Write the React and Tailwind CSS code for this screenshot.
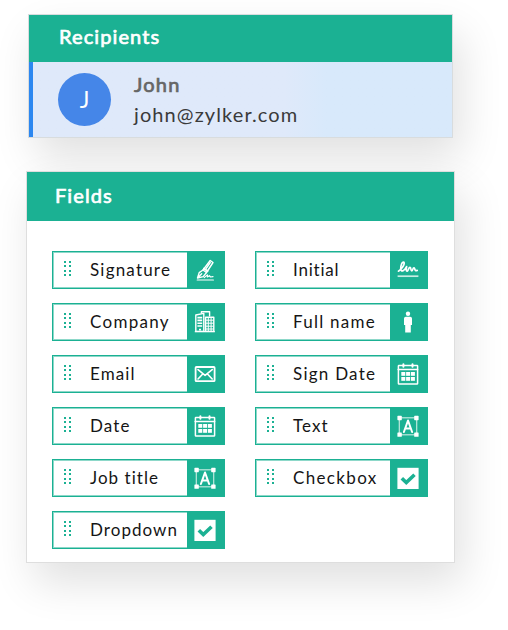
import React from "react";

const stroke = { fill: "none", stroke: "#fff", strokeLinecap: "round", strokeLinejoin: "round" };

function Icon({ children }) {
  return (
    <svg width="24" height="24" viewBox="0 0 24 24" className="block">
      {children}
    </svg>
  );
}

function SignatureIcon() {
  return (
    <Icon>
      <g {...stroke} strokeWidth="1.4">
        <path d="M17.2 2.5 L20 4.5 L13.5 14.5 L10 12 Z" />
        <path d="M10 12 L6.2 14.6 L4.5 20 L10.2 18.6 L13.5 14.5 M4.7 19.8 L8.7 15.8" />
        <path d="M11 10.6 L14.6 13" strokeWidth="2" />
        <path d="M17.2 4.6 L13.2 10.4" strokeWidth="1.6" />
        <path d="M11.2 19.6 L14.4 16.9 L14.4 19 L16.4 17.7 L17.5 19 L20 18.6" strokeWidth="1.2" />
        <path d="M4.2 22 H20.4" strokeWidth="1.2" />
      </g>
    </Icon>
  );
}

function CompanyIcon() {
  return (
    <Icon>
      <g {...stroke} strokeWidth="1.4" strokeLinecap="butt">
        <path d="M2.8 21.4 V5 L10.8 3.4 V21.4 Z" />
        <path d="M4.4 7.6 H9.2 M4.4 10.4 H9.2 M4.4 13.2 H9.2 M4.4 16 H9.2 M6 19.6 H8" strokeWidth="1.6" />
        <path d="M8.4 3.4 V1.8 H16.6 V6.5" />
        <path d="M12.6 21.4 V7.2 H20.8 V21.4 Z" />
        <path d="M15.3 7.2 V21.4 M18.1 7.2 V21.4 M12.6 10.2 H20.8 M12.6 13.2 H20.8 M12.6 16.2 H20.8 M12.6 19 H20.8" strokeWidth="1" />
        <path d="M1.8 21.6 H21.8" />
      </g>
    </Icon>
  );
}

function EmailIcon() {
  return (
    <Icon>
      <g {...stroke} strokeWidth="1.8">
        <rect x="2.6" y="5" width="19" height="14.2" rx="0.8" />
        <path d="M5 7.6 L12.1 13.4 L19.2 7.6 M5 17 L9.5 12.2 M19.2 17 L14.7 12.2" strokeWidth="1.6" />
      </g>
    </Icon>
  );
}

function CalendarIcon() {
  return (
    <Icon>
      <g {...stroke} strokeWidth="1.5">
        <rect x="2.4" y="3.4" width="19.2" height="18.6" rx="0.6" />
        <path d="M2.2 7.4 H21.6" />
        <path d="M7.4 2.2 V4.8 M16.5 2.2 V4.8" strokeWidth="2" />
      </g>
      <g fill="#fff">
        <rect x="5.3" y="10" width="4" height="3.8" />
        <rect x="10.1" y="10" width="4" height="3.8" />
        <rect x="14.9" y="10" width="4" height="3.8" />
        <rect x="5.3" y="15" width="4" height="3.8" />
        <rect x="10.1" y="15" width="4" height="3.8" />
        <rect x="14.9" y="15" width="4" height="3.8" />
      </g>
    </Icon>
  );
}

function InitialIcon() {
  return (
    <Icon>
      <path {...stroke} strokeWidth="1.7" d="M2.4 13.2 C5.5 11.5 9.2 6.2 7.9 4.2 C6.2 3 4.5 8 4.7 10.8 C5 14.4 8 13.4 10.6 8.6 C10.2 11 10 13.4 11.2 13.2 C12.6 12.8 12.4 9.4 14 9.4 C15.4 9.6 14.4 13 15.8 13 C17 12.8 16.6 9.6 18 9.8 C19.2 10 18.2 13.4 21.2 12.4" />
      <path d="M1.6 18.2 H22.4" stroke="#c6ece2" strokeWidth="1.7" />
    </Icon>
  );
}

function PersonIcon() {
  return (
    <Icon>
      <circle cx="12" cy="3.8" r="2.2" fill="#fff" />
      <path fill="#fff" d="M9.8 6.8 H14.2 Q16 6.8 16 8.6 V15 H14.8 V22.6 H9.2 V15 H8 V8.6 Q8 6.8 9.8 6.8 Z" />
    </Icon>
  );
}

function TextIcon() {
  return (
    <Icon>
      <rect x="3.3" y="3.8" width="17.4" height="17" fill="none" stroke="#bfe9de" strokeWidth="1.2" />
      <g fill="#fff">
        <rect x="1.4" y="1.8" width="4.4" height="4.4" rx="0.6" />
        <rect x="18.2" y="1.8" width="4.4" height="4.4" rx="0.6" />
        <rect x="1.4" y="18.4" width="4.4" height="4.4" rx="0.6" />
        <rect x="18.2" y="18.4" width="4.4" height="4.4" rx="0.6" />
      </g>
      <path {...stroke} strokeWidth="2" d="M7.9 18 L12 6.5 L16.1 18 M9.4 14.4 H14.6" />
    </Icon>
  );
}

function CheckIcon() {
  return (
    <Icon>
      <rect x="1.4" y="1.8" width="21.2" height="21.2" fill="#fff" />
      <path d="M5.8 12.2 L10.3 16.6 L18.5 8.8" fill="none" stroke="#1bb193" strokeWidth="3.6" />
    </Icon>
  );
}

const fields = [
  ["Signature", SignatureIcon, "tracking-[1.2px]"],
  ["Initial", InitialIcon, "tracking-[0.8px]"],
  ["Company", CompanyIcon, "tracking-[1.3px]"],
  ["Full name", PersonIcon, "tracking-[1.25px]"],
  ["Email", EmailIcon, "tracking-[1.1px]"],
  ["Sign Date", CalendarIcon, "tracking-[1.25px]"],
  ["Date", CalendarIcon, "tracking-[1.1px]"],
  ["Text", TextIcon, "tracking-[1.1px]"],
  ["Job title", TextIcon, "tracking-[1.05px]"],
  ["Checkbox", CheckIcon, "tracking-[1.35px]"],
  ["Dropdown", CheckIcon, "tracking-[1.05px]"],
];

function Grip() {
  return (
    <div className="mb-[3px] ml-[11px] grid w-[7px] grid-cols-2 gap-x-[3px] gap-y-[2.6px]">
      {[0, 1, 2, 3, 4, 5, 6, 7].map((i) => (
        <span key={i} className="size-[2px] bg-[#1bb193]" />
      ))}
    </div>
  );
}

function Field({ label, Glyph, tracking }) {
  return (
    <div className="flex h-[38px] items-stretch border border-[#1bb193] bg-white shadow-[inset_0_0_0_1px_rgba(27,177,147,0.5)]">
      <div className="flex flex-1 items-center">
        <Grip />
        <span className={"ml-[19px] whitespace-nowrap text-[17px] leading-[22px] text-[#151515] " + tracking}>{label}</span>
      </div>
      <div className="flex w-[37px] items-center justify-center bg-[#1bb193] pr-px">
        <Glyph />
      </div>
    </div>
  );
}

export default function App() {
  return (
    <div className="h-[630px] w-[508px] overflow-hidden bg-white pt-[14px] font-[Lato,sans-serif]">
      <section className="ml-[28px] h-[124px] w-[425px] border border-[#d8dcde] bg-white shadow-[8px_20px_40px_rgba(0,0,0,0.12)]">
        <h2 className="flex h-[47px] items-center bg-[#1bb193] pb-[6px] pl-[30px] text-[20px] tracking-[1.1px] text-white [-webkit-text-stroke:0.7px_#fff]">Recipients</h2>
        <div className="flex h-[75px] items-center border-l-[4px] border-[#2c87f0] bg-linear-to-r from-[#dfe9fa] from-60% to-[#d8e9fb] to-70%">
          <div className="ml-[25px] flex size-[53px] items-center justify-center rounded-full bg-[#4586e8] pb-px text-[23px] text-white">J</div>
          <div className="ml-[23px] flex flex-col pb-[2px]">
            <span className="text-[20px] leading-[30px] tracking-[1.2px] text-[#666] [-webkit-text-stroke:0.7px_#666]">John</span>
            <span className="text-[20px] leading-[30px] tracking-[1.1px] text-[#3a3a3a]">john@zylker.com</span>
          </div>
        </div>
      </section>
      <section className="relative mt-[33px] ml-[26px] h-[392px] w-[429px] border border-[#dedede] bg-white shadow-[8px_20px_40px_rgba(0,0,0,0.12)]">
        <h2 className="flex h-[49px] items-center bg-[#1bb193] pb-[3px] pl-[28px] text-[20px] tracking-[1.1px] text-white [-webkit-text-stroke:0.7px_#fff]">Fields</h2>
        <div className="ml-[25px] grid grid-cols-[173px_173px] gap-x-[30px] gap-y-[14px] pt-[30px]">
          {fields.map(([label, Glyph, tracking]) => (
            <Field key={label} label={label} Glyph={Glyph} tracking={tracking} />
          ))}
        </div>
      </section>
    </div>
  );
}
